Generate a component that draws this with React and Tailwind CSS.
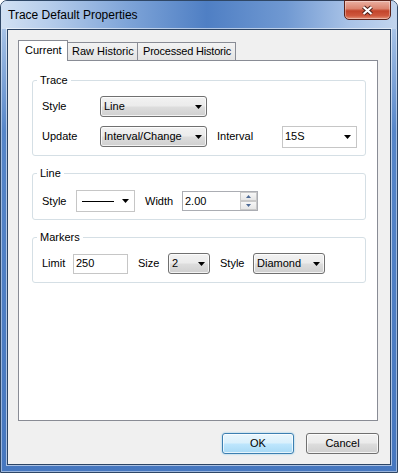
import React from 'react';

const Arrow = ({ color = '#000' }) => (
  <svg width="7" height="4" viewBox="0 0 7 4" className="shrink-0">
    <path d="M0 0h7L3.5 4z" fill={color} />
  </svg>
);

const ButtonSelect = ({ value, width }) => (
  <div
    className={`flex h-[21px] items-center justify-between rounded-[3px] border border-[#707070] bg-[linear-gradient(180deg,#f2f2f2_0%,#ebebeb_48%,#dddddd_52%,#cfcfcf_100%)] pl-[3px] pr-[4px] shadow-[inset_0_0_0_1px_rgba(255,255,255,0.75)] ${width}`}
  >
    <span>{value}</span>
    <Arrow />
  </div>
);

const FlatSelect = ({ children, width, height }) => (
  <div className={`flex items-center justify-between border border-[#c6c6c6] bg-white pl-[2px] pr-[5px] ${width} ${height}`}>
    {children}
    <Arrow />
  </div>
);

const SpinBox = ({ value }) => (
  <div className="flex h-[20px] w-[76px] items-center border border-[#abadb3] bg-white pl-[2px]">
    <span>{value}</span>
    <div className="ml-auto flex h-full w-[17px] flex-col">
      <div className="flex h-1/2 items-center justify-center border border-[#c9c9c9] bg-[linear-gradient(180deg,#f7f7f7,#e6e6e6)]">
        <svg width="5" height="3" viewBox="0 0 5 3">
          <path d="M0 3h5L2.5 0z" fill="#4d6a96" />
        </svg>
      </div>
      <div className="flex h-1/2 items-center justify-center border border-[#c9c9c9] bg-[linear-gradient(180deg,#f7f7f7,#e6e6e6)]">
        <svg width="5" height="3" viewBox="0 0 5 3">
          <path d="M0 0h5L2.5 3z" fill="#4d6a96" />
        </svg>
      </div>
    </div>
  </div>
);

const Group = ({ title, className, children }) => (
  <fieldset className={`w-[334px] rounded-[3px] border border-[#d5dfe5] pl-[9px] ${className}`}>
    <legend className="-ml-[5px] px-[3px] leading-[12px]">{title}</legend>
    {children}
  </fieldset>
);

export default function App() {
  return (
    <div className="h-[473px] w-[398px] font-['Liberation_Sans',Arial,sans-serif] text-[11px] text-black">
      <div className="flex h-full flex-col rounded-t-[7px] border border-[#2f4766] bg-[linear-gradient(180deg,#c3d6ef_0px,#9dbbe3_40px,#5686c9_130px,#4677bf_100%)] shadow-[inset_0_0_0_1px_rgba(255,255,255,0.45)]">
        {/* title bar */}
        <div className="flex h-[28px] shrink-0 items-start justify-between rounded-t-[6px] bg-[linear-gradient(90deg,#d2e1f3_0%,#b6cdeb_12%,#7ea4d8_32%,#4f7fc4_52%,#7099d2_72%,#a9c3e7_88%,#c2d5ee_100%)]">
          <span className="self-center pl-[7px] text-[12px]">Trace Default Properties</span>
          <div className="-mt-px mr-[6px] flex h-[20px] w-[47px] items-center justify-center rounded-b-[5px] border border-[#5b2219] bg-[linear-gradient(180deg,#eab0a2_0%,#dc8570_42%,#c2442b_55%,#cf583d_82%,#e4957c_100%)] shadow-[inset_0_0_0_1px_rgba(255,255,255,0.35)]">
            <svg width="13" height="11" viewBox="0 0 13 11">
              <path d="M2.5 2L10.5 9M10.5 2L2.5 9" stroke="#4a1f18" strokeWidth="4.2" />
              <path d="M2.5 2L10.5 9M10.5 2L2.5 9" stroke="#fff" strokeWidth="2.2" />
            </svg>
          </div>
        </div>

        {/* client area */}
        <div className="mx-[6px] mb-[7px] flex flex-1 flex-col border border-[#2c4464] bg-[#f0f0f0] pb-[10px] pl-[10px] pr-[12px] pt-[10px] shadow-[0_0_0_1px_rgba(255,255,255,0.55)]">
          {/* tabs */}
          <div className="flex h-[20px] items-end whitespace-nowrap">
            <div className="relative z-10 -mb-px flex h-[21px] w-[50px] items-center border border-b-0 border-[#898c95] bg-white pb-[1px] pl-[6px]">
              Current
            </div>
            <div className="-ml-px flex h-[18px] w-[71px] items-center border border-b-0 border-[#898c95] bg-[linear-gradient(180deg,#f3f3f3,#e3e3e3)] pl-[4px]">
              Raw Historic
            </div>
            <div className="flex h-[18px] w-[98px] items-center border border-b-0 border-l-0 border-[#898c95] bg-[linear-gradient(180deg,#f3f3f3,#e3e3e3)] pl-[5px] tracking-[-0.2px]">
              Processed Historic
            </div>
          </div>

          {/* tab panel */}
          <div className="h-[361px] border border-[#898c95] bg-white pl-[13px] pt-[13px]">
            <Group title="Trace">
              <div className="flex flex-col gap-[9px] pb-[8px] pt-[10px]">
                <div className="flex h-[21px] items-center">
                  <span className="w-[58px]">Style</span>
                  <ButtonSelect value="Line" width="w-[107px]" />
                </div>
                <div className="flex h-[21px] items-center">
                  <span className="w-[58px]">Update</span>
                  <ButtonSelect value="Interval/Change" width="w-[107px]" />
                  <span className="ml-[10px] w-[65px]">Interval</span>
                  <FlatSelect width="w-[75px]" height="h-[22px]">
                    <span>15S</span>
                  </FlatSelect>
                </div>
              </div>
            </Group>

            <Group title="Line" className="mt-[11px]">
              <div className="mb-[7px] mt-[11px] flex h-[22px] items-center">
                <span className="w-[34px]">Style</span>
                <FlatSelect width="w-[59px]" height="h-[22px]">
                  <span className="ml-[3px] h-px w-[32px] bg-black" />
                </FlatSelect>
                <span className="ml-[10px] w-[37px]">Width</span>
                <SpinBox value="2.00" />
              </div>
            </Group>

            <Group title="Markers" className="mt-[11px]">
              <div className="mb-[8px] mt-[10px] flex h-[21px] items-center">
                <span className="w-[31px]">Limit</span>
                <div className="flex h-[20px] w-[55px] items-center border border-[#c6c6c6] bg-white pl-[2px]">250</div>
                <span className="ml-[10px] w-[30px]">Size</span>
                <ButtonSelect value="2" width="w-[42px]" />
                <span className="ml-[10px] w-[33px]">Style</span>
                <ButtonSelect value="Diamond" width="w-[72px]" />
              </div>
            </Group>
          </div>

          {/* buttons */}
          <div className="-mr-px mt-[12px] flex h-[21px] justify-end gap-[12px]">
            <button className="flex w-[72px] items-center justify-center rounded-[3px] border border-[#3c7fb1] bg-[linear-gradient(180deg,#eaf6fd_0%,#d9f0fc_48%,#bee6fd_52%,#a7d9f5_100%)] shadow-[inset_0_0_0_1px_rgba(255,255,255,0.7),0_0_2px_#7ec4ea]">
              OK
            </button>
            <button className="flex w-[73px] items-center justify-center rounded-[3px] border border-[#707070] bg-[linear-gradient(180deg,#f2f2f2_0%,#ebebeb_48%,#dddddd_52%,#cfcfcf_100%)] shadow-[inset_0_0_0_1px_rgba(255,255,255,0.75)]">
              Cancel
            </button>
          </div>
        </div>
      </div>
    </div>
  );
}
